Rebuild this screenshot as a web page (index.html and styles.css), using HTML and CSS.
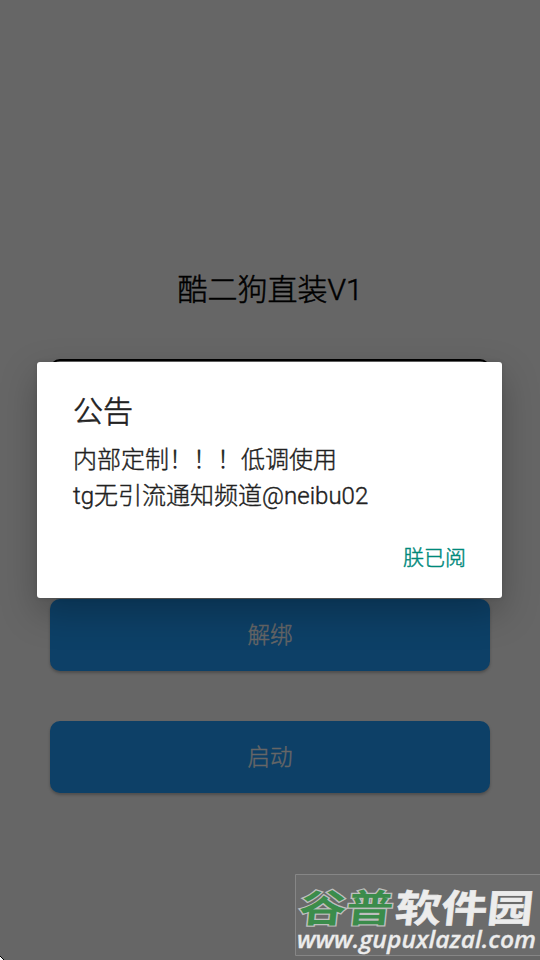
FILE: index.html
```html
<!DOCTYPE html>
<html lang="zh-CN">
<head>
<meta charset="utf-8">
<title>酷二狗直装V1</title>
<link rel="stylesheet" href="styles.css">
</head>
<body>
<main class="screen">
  <h1 class="title">酷二狗直装<span class="latin">V1</span></h1>
  <div class="field"></div>
  <button class="action">解绑</button>
  <button class="action">启动</button>
</main>
<section class="dialog" role="dialog">
  <h2 class="dialog-title">公告</h2>
  <p class="dialog-text">内部定制！！！低调使用<br><span class="latin">tg</span>无引流通知频道<span class="latin tight">@neibu02</span></p>
  <div class="dialog-actions"><button class="confirm">朕已阅</button></div>
</section>
<svg class="watermark" width="245" height="86" viewBox="295 874 245 86">
  <path class="frame" d="M540 874.5H295.5V955.5H540"/>
  <g class="brand" transform="translate(0 921.5) skewX(-6)">
    <text class="brand-green" x="298" y="0" textLength="94" lengthAdjust="spacingAndGlyphs">谷普</text>
    <text class="brand-white" x="394" y="0" textLength="138" lengthAdjust="spacingAndGlyphs">软件园</text>
  </g>
  <text class="site" x="297" y="948" textLength="239" lengthAdjust="spacingAndGlyphs">www.gupuxlazal.com</text>
</svg>
<svg class="corner" width="4" height="4"><path fill="#000" d="M0 0h1v1h1v1h1v1h1V4H0z"/><path fill="#fff" d="M0 1h1v1h1v1h1v1H0z"/></svg>
</body>
</html>
```
FILE: styles.css
```css
* { box-sizing: border-box; }
body {
  margin: 0;
  position: relative;
  height: 960px;
  overflow: hidden;
  background: #666;
  font-family: Roboto, "Noto Sans CJK SC", sans-serif;
}
h1, h2, p { margin: 0; font-weight: 300; }
button { border: 0; padding: 0; font-family: inherit; font-weight: 300; }
.tight { letter-spacing: 0.02px; }
.screen {
  display: flex;
  flex-direction: column;
  padding: 268px 50px 0;
}
.title {
  height: 44px;
  line-height: 44px;
  font-size: 30px;
  text-align: center;
  color: #000;
  -webkit-text-stroke: 0.5px #000;
}
.field {
  height: 72px;
  margin: 47px 0 168px;
  border: 2px solid #000;
  border-radius: 10px;
}
.action {
  height: 72px;
  margin-bottom: 50px;
  border-radius: 10px;
  background: #0d4067;
  color: #666;
  font-size: 22.5px;
  line-height: 72px;
  -webkit-text-stroke: 0.45px #666;
  box-shadow: 0 2px 3px rgba(0, 0, 0, .25);
}
.dialog {
  position: absolute;
  left: 37px;
  top: 362px;
  width: 465px;
  height: 236px;
  padding: 28px 36px 0;
  border-radius: 3px;
  background: #fff;
  color: #212121;
  box-shadow: 0 14px 36px rgba(0, 0, 0, .25), 0 0 4px rgba(0, 0, 0, .12);
}
.dialog-title {
  height: 44px;
  line-height: 44px;
  font-size: 30px;
  -webkit-text-stroke: 0.6px #212121;
}
.dialog-text {
  padding-top: 8px;
  font-size: 24px;
  line-height: 36px;
  -webkit-text-stroke: 0.4px #212121;
}
.dialog-actions {
  display: flex;
  justify-content: flex-end;
  padding-top: 26px;
}
.confirm {
  height: 36px;
  line-height: 36px;
  font-size: 21px;
  color: #00897b;
  background: none;
  -webkit-text-stroke: 0.45px #00897b;
}
.watermark { position: absolute; left: 295px; top: 874px; overflow: visible; }
.frame { fill: #6b6b6b; stroke: #868686; }
.brand {
  font: 700 38px/1 "Noto Sans CJK SC", sans-serif;
  paint-order: stroke;
}
.brand-green { fill: #3b8c4b; stroke: #bebebe; stroke-width: 2.5px; }
.brand-white { fill: #ececec; stroke: #ececec; stroke-width: 0.6px; }
.site {
  font: italic 600 23.5px/1 "Open Sans", sans-serif;
  fill: #ececec;
  stroke: #ececec;
  stroke-width: 0.3px;
}
.corner { position: absolute; left: 0; top: 956px; }
```
